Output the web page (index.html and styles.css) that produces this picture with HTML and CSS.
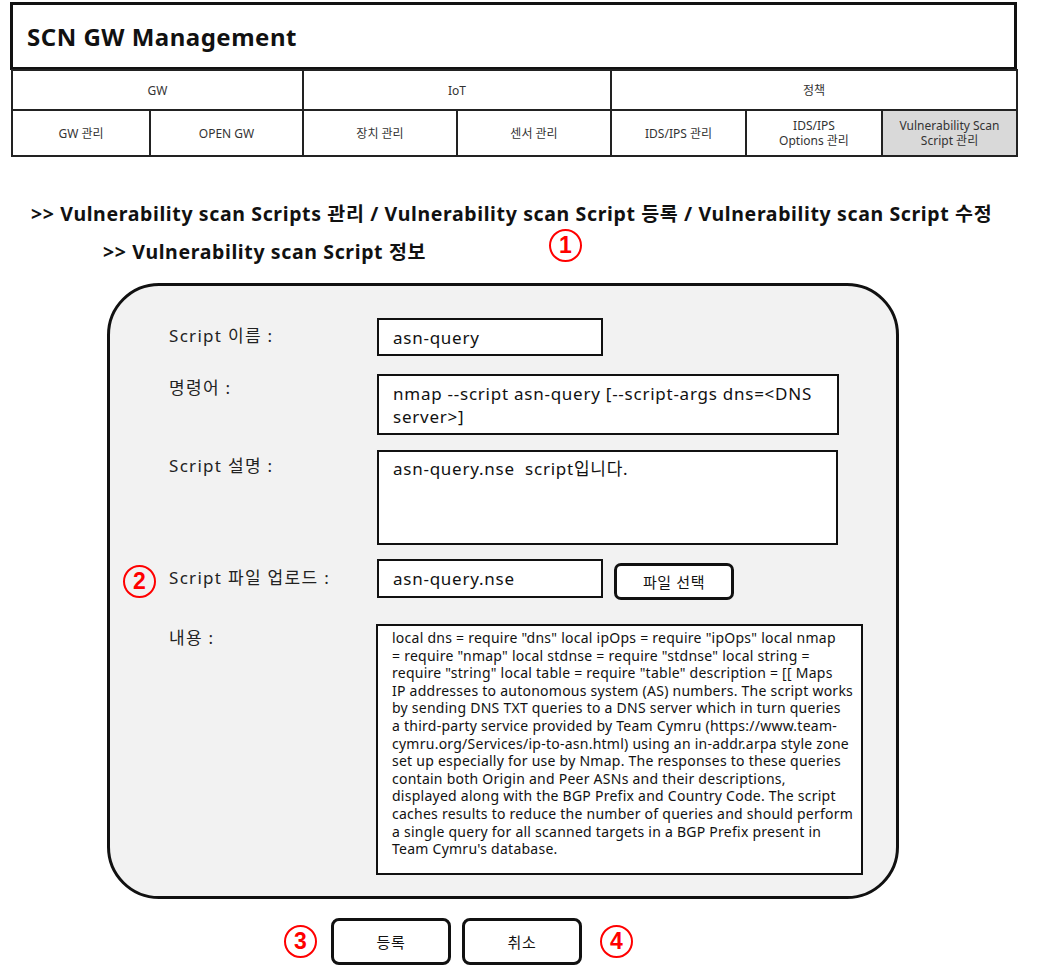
FILE: index.html
```html
<!DOCTYPE html>
<html lang="ko">
<head>
<meta charset="utf-8">
<title>SCN GW Management</title>
<link rel="stylesheet" href="styles.css">
</head>
<body>
<header class="top">
  <div class="title-box"><h1 class="title">SCN GW Management</h1></div>
  <table class="nav">
    <colgroup>
      <col class="c1"><col class="c2"><col class="c3"><col class="c4"><col class="c5"><col class="c6"><col class="c7">
    </colgroup>
    <tr class="nav-row1">
      <td colspan="2">GW</td>
      <td colspan="2">IoT</td>
      <td colspan="3">정책</td>
    </tr>
    <tr class="nav-row2">
      <td>GW 관리</td>
      <td>OPEN GW</td>
      <td class="kr">장치 관리</td>
      <td class="kr">센서 관리</td>
      <td>IDS/IPS 관리</td>
      <td>IDS/IPS<br>Options 관리</td>
      <td class="active">Vulnerability Scan<br>Script 관리</td>
    </tr>
  </table>
</header>

<section class="crumbs">
  <p class="crumb1">&gt;&gt; Vulnerability scan Scripts 관리 / Vulnerability scan Script 등록 / Vulnerability scan Script 수정</p>
  <p class="crumb2">&gt;&gt; Vulnerability scan Script 정보</p>
  <span class="mark mark1">1</span>
</section>

<main class="panel">
  <div class="row row-name">
    <label class="lbl">Script 이름 :</label>
    <div class="box box-short">asn-query</div>
  </div>
  <div class="row row-cmd">
    <label class="lbl">명령어 :</label>
    <div class="box box-cmd">nmap --script asn-query [--script-args dns=&lt;DNS<br>server&gt;]</div>
  </div>
  <div class="row row-desc">
    <label class="lbl">Script 설명 :</label>
    <div class="box box-desc">asn-query.nse&nbsp; script입니다.</div>
  </div>
  <div class="row row-file">
    <span class="mark mark2">2</span>
    <label class="lbl">Script 파일 업로드 :</label>
    <div class="box box-short">asn-query.nse</div>
    <button class="btn btn-file">파일 선택</button>
  </div>
  <div class="row row-content">
    <label class="lbl">내용 :</label>
    <div class="box box-content">local dns = require "dns" local ipOps = require "ipOps" local nmap<br>= require "nmap" local stdnse = require "stdnse" local string =<br>require "string" local table = require "table" description = [[ Maps<br>IP addresses to autonomous system (AS) numbers. The script works<br>by sending DNS TXT queries to a DNS server which in turn queries<br>a third-party service provided by Team Cymru (https://www.team-<br>cymru.org/Services/ip-to-asn.html) using an in-addr.arpa style zone<br>set up especially for use by Nmap. The responses to these queries<br>contain both Origin and Peer ASNs and their descriptions,<br>displayed along with the BGP Prefix and Country Code. The script<br>caches results to reduce the number of queries and should perform<br>a single query for all scanned targets in a BGP Prefix present in<br>Team Cymru's database.</div>
  </div>
</main>

<footer class="actions">
  <span class="mark">3</span>
  <button class="btn btn-act">등록</button>
  <button class="btn btn-act">취소</button>
  <span class="mark">4</span>
</footer>
</body>
</html>
```

FILE: styles.css
```css
* { box-sizing: border-box; }

body {
  margin: 0;
  width: 1064px;
  height: 970px;
  background: #fff;
  color: #111;
  font-family: "Noto Sans", "Noto Sans CJK KR", sans-serif;
  overflow: hidden;
}

.top {
  padding-top: 2px;
}

.title-box {
  margin-left: 10px;
  width: 1007px;
  height: 68px;
  border: 3px solid #111;
  display: flex;
  align-items: center;
  padding-left: 14px;
}

.title {
  margin: 0;
  font-size: 24px;
  font-weight: 700;
  letter-spacing: 0.5px;
  color: #111;
}

.nav {
  margin-left: 11px;
  width: 1005px;
  border-collapse: collapse;
  table-layout: fixed;
  margin-top: -1px;
}

.nav .c1 { width: 138px; }
.nav .c2 { width: 153px; }
.nav .c3 { width: 154px; }
.nav .c4 { width: 154px; }
.nav .c5 { width: 135px; }
.nav .c6 { width: 136px; }
.nav .c7 { width: 135px; }

.nav td {
  border: 2px solid #222;
  text-align: center;
  vertical-align: middle;
  font-size: 12px;
  line-height: 15px;
  color: #333;
  padding: 0;
}

.nav-row1 td { height: 40px; }
.nav-row2 td { height: 46px; }
.nav td.active { background: #d9d9d9; }

.crumbs {
  position: relative;
  height: 126px;
  padding-top: 45px;
}

.crumbs p {
  margin: 0;
  font-weight: 700;
  font-size: 19.5px;
  line-height: 24px;
  letter-spacing: 0.63px;
  color: #111;
}

.crumb1 { padding-left: 31px; }
.crumb2 { padding-left: 103px; margin-top: 14px !important; }

.mark {
  width: 33px;
  height: 33px;
  border: 2px solid #f00;
  border-radius: 50%;
  color: #f00;
  font-family: "Liberation Sans", "Noto Sans", sans-serif;
  font-weight: 700;
  font-size: 23px;
  line-height: 29px;
  text-align: center;
  display: inline-block;
  flex: none;
}

.mark1 {
  position: absolute;
  left: 549px;
  top: 72px;
}

.panel {
  margin-left: 107px;
  width: 792px;
  height: 616px;
  border: 3px solid #111;
  border-radius: 52px;
  background: #f2f2f2;
  padding: 32px 0 0 59px;
}

.row {
  position: relative;
  display: flex;
  align-items: flex-start;
}

.lbl {
  width: 208px;
  flex: none;
  font-size: 17px;
  line-height: 22px;
  letter-spacing: 1.3px;
  color: #222;
}

.box {
  background: #fff;
  border: 2px solid #111;
  font-size: 17px;
  line-height: 23px;
  letter-spacing: 0.75px;
  color: #111;
  padding: 6px 14px;
  white-space: nowrap;
}

.row-name .lbl { padding-top: 7px; }
.box-short { width: 226px; height: 38px; }

.row-cmd { margin-top: 18px; }
.row-cmd .lbl { padding-top: 3px; }
.box-cmd { width: 462px; height: 61px; padding-top: 6px; }

.row-desc { margin-top: 15px; }
.row-desc .lbl { padding-top: 5px; }
.box-desc { width: 461px; height: 95px; padding-top: 5px; }

.row-file { margin-top: 14px; }
.row-file .lbl { padding-top: 8px; }
.row-file .box-short { height: 39px; padding-top: 6px; }

.mark2 {
  position: absolute;
  left: -46px;
  top: 6px;
}

.btn {
  font-family: "Noto Sans", "Noto Sans CJK KR", sans-serif;
  background: #fff;
  border: 3px solid #111;
  color: #111;
  cursor: pointer;
}

.btn-file {
  margin-left: 11px;
  margin-top: 4px;
  width: 120px;
  height: 37px;
  border-radius: 7px;
  font-size: 15px;
  letter-spacing: 0.6px;
}

.row-content { margin-top: 24px; }
.row-content .lbl { padding-top: 3px; }

.box-content {
  margin-left: -1px;
  width: 487px;
  height: 251px;
  font-size: 14px;
  line-height: 17.6px;
  padding: 3px 6px 0 14px;
  letter-spacing: 0.25px;
  overflow: hidden;
}

.actions {
  display: flex;
  align-items: center;
  padding-left: 284px;
  margin-top: 19px;
}

.actions .mark:first-child { margin-right: 14px; }
.actions .mark:last-child { margin-left: 18px; }

.btn-act {
  width: 120px;
  height: 47px;
  border-radius: 8px;
  font-size: 15px;
  letter-spacing: 0.6px;
}

.btn-act + .btn-act { margin-left: 11px; }
```
